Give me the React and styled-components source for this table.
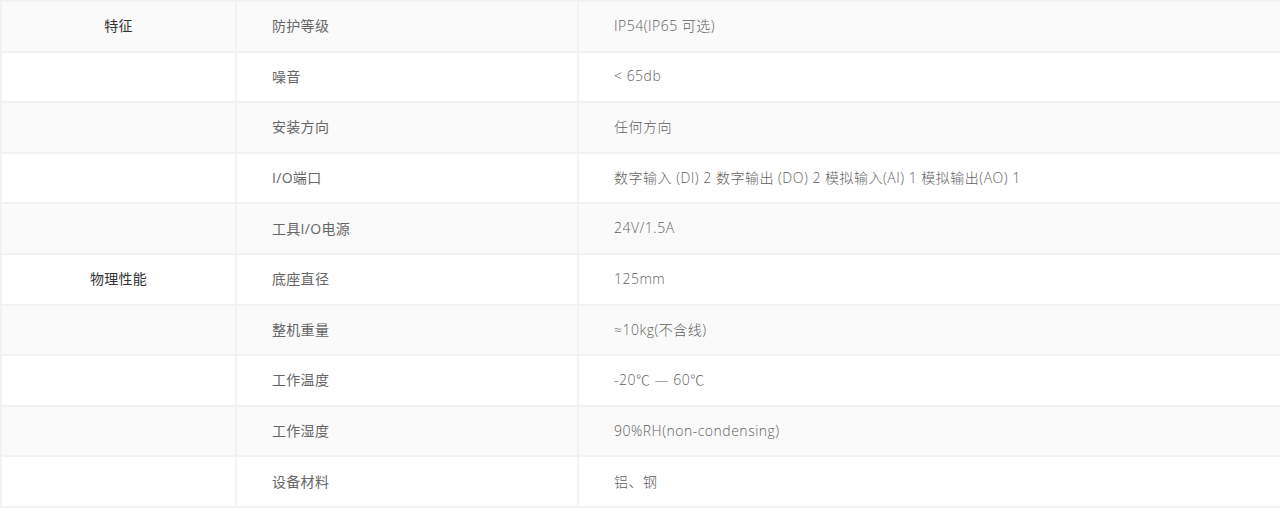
import React from "react";
import styled, { createGlobalStyle } from "styled-components";

const GlobalStyle = createGlobalStyle`
  html, body {
    margin: 0;
    padding: 0;
    background: #ffffff;
    overflow: hidden;
  }
  body {
    font-family: "Open Sans", "Noto Sans CJK SC", sans-serif;
  }
`;

const Wrapper = styled.div`
  width: 1280px;
  overflow: hidden;
`;

const SpecTable = styled.table`
  width: 1284px;
  border-collapse: separate;
  border-spacing: 2px;
  margin: 0;
  background: #f2f2f2;
  table-layout: fixed;
  font-size: 14px;
  letter-spacing: 0.3px;
`;

const Row = styled.tr`
  height: 48.6px;
  background: ${(p) => (p.$odd ? "#fafafa" : "#ffffff")};
`;

const GroupCell = styled.td`
  width: 233px;
  padding: 0 0 2px;
  text-align: center;
  color: #333333;
  background: inherit;
`;

const NameCell = styled.td`
  width: 305px;
  padding: 0 0 2px 35px;
  color: #666666;
  background: inherit;
`;

const ValueCell = styled.td`
  padding: 0 0 2px 35px;
  color: #5f5f5f;
  font-weight: 300;
  letter-spacing: 0.5px;
  background: inherit;
`;

const rows = [
  { group: "特征", name: "防护等级", value: "IP54(IP65 可选)" },
  { name: "噪音", value: "< 65db" },
  { name: "安装方向", value: "任何方向" },
  {
    name: "I/O端口",
    value: "数字输入 (DI) 2 数字输出 (DO) 2 模拟输入(AI) 1 模拟输出(AO) 1",
  },
  { name: "工具I/O电源", value: "24V/1.5A" },
  { group: "物理性能", name: "底座直径", value: "125mm" },
  { name: "整机重量", value: "≈10kg(不含线)" },
  { name: "工作温度", value: "-20℃ — 60℃" },
  { name: "工作湿度", value: "90%RH(non-condensing)" },
  { name: "设备材料", value: "铝、钢" },
];

export default function App() {
  return (
    <Wrapper>
      <GlobalStyle />
      <SpecTable>
        <tbody>
          {rows.map((r, i) => (
            <Row key={r.name} $odd={i % 2 === 0}>
              <GroupCell>{r.group || ""}</GroupCell>
              <NameCell>{r.name}</NameCell>
              <ValueCell>{r.value}</ValueCell>
            </Row>
          ))}
        </tbody>
      </SpecTable>
    </Wrapper>
  );
}
